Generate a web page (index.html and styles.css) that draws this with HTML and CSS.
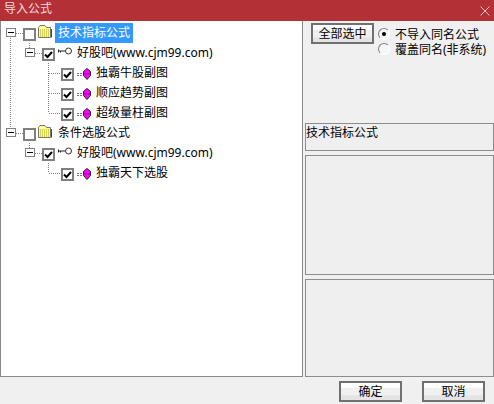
FILE: index.html
```html
<!DOCTYPE html>
<html lang="zh">
<head>
<meta charset="utf-8">
<title>导入公式</title>
<link rel="stylesheet" href="styles.css">
</head>
<body>
<div class="window">
  <header class="titlebar">
    <span class="title">导入公式</span>
    <svg class="close" width="10" height="10" viewBox="0 0 10 10"><path d="M0.5 0.5L9.5 9.5M9.5 0.5L0.5 9.5" stroke="#e8c4c6" fill="none"/></svg>
  </header>
  <main class="content">
    <section class="tree">
      <svg class="lines" width="120" height="170" viewBox="0 0 120 170">
        <g stroke="#808080" stroke-dasharray="1 1" fill="none" shape-rendering="crispEdges">
          <path d="M10.5 15V105"/>
          <path d="M16 10.5H23"/>
          <path d="M29.500 20V26"/>
          <path d="M35 30.500H42"/>
          <path d="M48.500 40V90"/>
          <path d="M49 50.500H61M49 70.500H61M49 90.500H61"/>
          <path d="M16 110.500H23"/>
          <path d="M29.500 120V126"/>
          <path d="M35 130.500H42"/>
          <path d="M48.500 140V150"/>
          <path d="M49 150.500H61"/>
        </g>
      </svg>
      <div class="row depth0">
        <span class="exp"></span>
        <span class="check big"></span>
        <svg class="folder" width="15" height="13" viewBox="0 0 15 13"><path d="M1.5 12.5V2.5L3 .5H8L9.5 2.5H13.5V12.5Z" fill="#ffff66" stroke="#777"/><path d="M2 3H9" stroke="#fff"/><path d="M3 5H13M3 7H13M3 9H13M3 11H13" stroke="#a8a840" stroke-dasharray="1 1"/><path d="M14.5 4V12.5" stroke="#444"/></svg>
        <span class="label selected">技术指标公式</span>
      </div>
      <div class="row depth1">
        <span class="exp"></span>
        <span class="check"><svg class="tick" width="9" height="8" viewBox="0 0 9 8"><path d="M1 3.5L3.5 6L8 1" stroke="#000" stroke-width="2" fill="none"/></svg></span>
        <svg class="key" width="15" height="8" viewBox="0 0 15 8"><path d="M1 4H8" stroke="#222" fill="none"/><path d="M1.500 2.500V5.500M3.500 4V5.500" stroke="#222"/><circle cx="11.500" cy="4" r="3" fill="#fff" stroke="#333"/></svg>
        <span class="label">好股吧(www.cjm99.com)</span>
      </div>
      <div class="row depth2">
        <span class="check"><svg class="tick" width="9" height="8" viewBox="0 0 9 8"><path d="M1 3.5L3.5 6L8 1" stroke="#000" stroke-width="2" fill="none"/></svg></span>
        <svg class="gem" width="15" height="12" viewBox="0 0 15 12"><path d="M1 5.500H7M1 7.500H7" stroke="#777" stroke-dasharray="2 1" fill="none"/><path d="M11 .5L14.500 3.500V7.500L11 11.500L7.500 7.500V3.500Z" fill="#ff00ff" stroke="#222"/><path d="M8 6H14" stroke="#a000a0"/></svg>
        <span class="label">独霸牛股副图</span>
      </div>
      <div class="row depth2">
        <span class="check"><svg class="tick" width="9" height="8" viewBox="0 0 9 8"><path d="M1 3.5L3.5 6L8 1" stroke="#000" stroke-width="2" fill="none"/></svg></span>
        <svg class="gem" width="15" height="12" viewBox="0 0 15 12"><path d="M1 5.500H7M1 7.500H7" stroke="#777" stroke-dasharray="2 1" fill="none"/><path d="M11 .5L14.500 3.500V7.500L11 11.500L7.500 7.500V3.500Z" fill="#ff00ff" stroke="#222"/><path d="M8 6H14" stroke="#a000a0"/></svg>
        <span class="label">顺应趋势副图</span>
      </div>
      <div class="row depth2">
        <span class="check"><svg class="tick" width="9" height="8" viewBox="0 0 9 8"><path d="M1 3.5L3.5 6L8 1" stroke="#000" stroke-width="2" fill="none"/></svg></span>
        <svg class="gem" width="15" height="12" viewBox="0 0 15 12"><path d="M1 5.500H7M1 7.500H7" stroke="#777" stroke-dasharray="2 1" fill="none"/><path d="M11 .5L14.500 3.500V7.500L11 11.500L7.500 7.500V3.500Z" fill="#ff00ff" stroke="#222"/><path d="M8 6H14" stroke="#a000a0"/></svg>
        <span class="label">超级量柱副图</span>
      </div>
      <div class="row depth0">
        <span class="exp"></span>
        <span class="check big"></span>
        <svg class="folder" width="15" height="13" viewBox="0 0 15 13"><path d="M1.5 12.5V2.5L3 .5H8L9.5 2.5H13.5V12.5Z" fill="#ffff66" stroke="#777"/><path d="M2 3H9" stroke="#fff"/><path d="M3 5H13M3 7H13M3 9H13M3 11H13" stroke="#a8a840" stroke-dasharray="1 1"/><path d="M14.5 4V12.5" stroke="#444"/></svg>
        <span class="label">条件选股公式</span>
      </div>
      <div class="row depth1">
        <span class="exp"></span>
        <span class="check"><svg class="tick" width="9" height="8" viewBox="0 0 9 8"><path d="M1 3.5L3.5 6L8 1" stroke="#000" stroke-width="2" fill="none"/></svg></span>
        <svg class="key" width="15" height="8" viewBox="0 0 15 8"><path d="M1 4H8" stroke="#222" fill="none"/><path d="M1.500 2.500V5.500M3.500 4V5.500" stroke="#222"/><circle cx="11.500" cy="4" r="3" fill="#fff" stroke="#333"/></svg>
        <span class="label">好股吧(www.cjm99.com)</span>
      </div>
      <div class="row depth2">
        <span class="check"><svg class="tick" width="9" height="8" viewBox="0 0 9 8"><path d="M1 3.5L3.5 6L8 1" stroke="#000" stroke-width="2" fill="none"/></svg></span>
        <svg class="gem" width="15" height="12" viewBox="0 0 15 12"><path d="M1 5.500H7M1 7.500H7" stroke="#777" stroke-dasharray="2 1" fill="none"/><path d="M11 .5L14.500 3.500V7.500L11 11.500L7.500 7.500V3.500Z" fill="#ff00ff" stroke="#222"/><path d="M8 6H14" stroke="#a000a0"/></svg>
        <span class="label">独霸天下选股</span>
      </div>
    </section>
    <aside class="side">
      <div class="controls">
        <button class="btn">全部选中</button>
        <div class="radios">
          <div class="radio-row"><span class="radio on"></span><span>不导入同名公式</span></div>
          <div class="radio-row"><span class="radio"></span><span>覆盖同名(非系统)</span></div>
        </div>
      </div>
      <div class="panel p1">技术指标公式</div>
      <div class="panel p2"></div>
      <div class="panel p3"></div>
    </aside>
  </main>
  <footer class="footer">
    <button class="btn">确定</button>
    <button class="btn">取消</button>
  </footer>
</div>
</body>
</html>
```
FILE: styles.css
```css
* { box-sizing: border-box; }
html, body { margin: 0; padding: 0; }
body {
  width: 494px;
  height: 404px;
  overflow: hidden;
  background: #f0f0f0;
  font-family: "Noto Sans", "Noto Sans CJK SC", sans-serif;
  font-size: 12px;
  line-height: 16px;
  color: #000;
}
.window { display: flex; flex-direction: column; height: 404px; }
.titlebar {
  height: 21px;
  flex: none;
  background: #b33036;
  color: #f3dcdd;
  display: flex;
  align-items: center;
  justify-content: space-between;
  padding: 0 4px 3px 4px;
}
.title { font-size: 12px; }
.close { margin-top: 3px; }
.content { display: flex; height: 356px; flex: none; }
.tree {
  position: relative;
  width: 303px;
  flex: none;
  background: #fff;
  border: 1px solid #8a8a8a;
  border-top: 0;
  padding-top: 2px;
}
.lines { position: absolute; left: -1px; top: 2px; }
.row { position: relative; height: 20px; display: flex; align-items: center; }
.depth0 { padding-left: 5px; }
.depth1 { padding-left: 24px; }
.depth2 { padding-left: 60px; }
.exp {
  position: relative;
  width: 10px;
  height: 9px;
  border: 1px solid #808080;
  background: #fff;
  margin-top: -1px;
  flex: none;
}
.exp::after {
  content: "";
  position: absolute;
  left: 1px;
  right: 1px;
  top: 3px;
  height: 1px;
  background: #000;
}
.check {
  width: 13px;
  height: 13px;
  border: 2px solid #808080;
  background: #fff;
  flex: none;
  margin-top: 3px;
  display: flex;
  align-items: center;
  justify-content: center;
}
.depth0 .check { margin-left: 7px; }
.depth1 .check { margin-left: 7px; }
.tick { display: block; flex: none; }
.folder { flex: none; margin: -4px 0 0 1px; }
.key { flex: none; margin: -4px 0 0 2px; }
.gem { flex: none; margin: 2px 0 0 2px; }
.label { white-space: nowrap; padding: 0 2px; margin-left: 3px; }
.depth0 .label { margin-left: 3px; height: 20px; line-height: 20px; padding: 0 3px; }
.depth1 .label { margin-left: 3px; padding: 0 2px; }
.selected { background: #3399ff; color: #fff; }
.side { flex: 1; padding-left: 2px; display: flex; flex-direction: column; min-width: 0; }
.controls { height: 102px; flex: none; display: flex; align-items: flex-start; padding: 2px 0 0 6px; }
.btn {
  width: 63px;
  height: 21px;
  padding: 0;
  border: 2px solid #707070;
  background: linear-gradient(#ffffff 0, #ffffff 25%, #f0f0f0 30%, #f0f0f0 70%, #e4e4e4 75%, #e4e4e4 100%);
  font: inherit;
  color: #000;
}
.radios { margin: 4px 0 0 4px; display: flex; flex-direction: column; }
.radio-row { display: flex; align-items: flex-start; height: 15px; line-height: 15px; white-space: nowrap; gap: 5px; }
.radio {
  position: relative;
  width: 12px;
  height: 12px;
  margin-top: 1px;
  border-radius: 50%;
  background: #f6f6f6;
  border: 1px solid;
  border-color: #808080 #ffffff #ffffff #808080;
  flex: none;
}
.radio.on::after {
  content: "";
  position: absolute;
  left: 3px;
  top: 3px;
  width: 4px;
  height: 4px;
  border-radius: 50%;
  background: #000;
}
.panel { border: 1px solid #8c8c8c; flex: none; background: #efefef; }
.p1 { height: 28px; padding: 1px 0 0 0; margin-bottom: 4px; }
.p2 { height: 120px; margin-bottom: 4px; }
.p3 { height: 98px; }
.footer { flex: 1; display: flex; justify-content: flex-end; gap: 20px; padding: 4px 9px 0 0; }
```
